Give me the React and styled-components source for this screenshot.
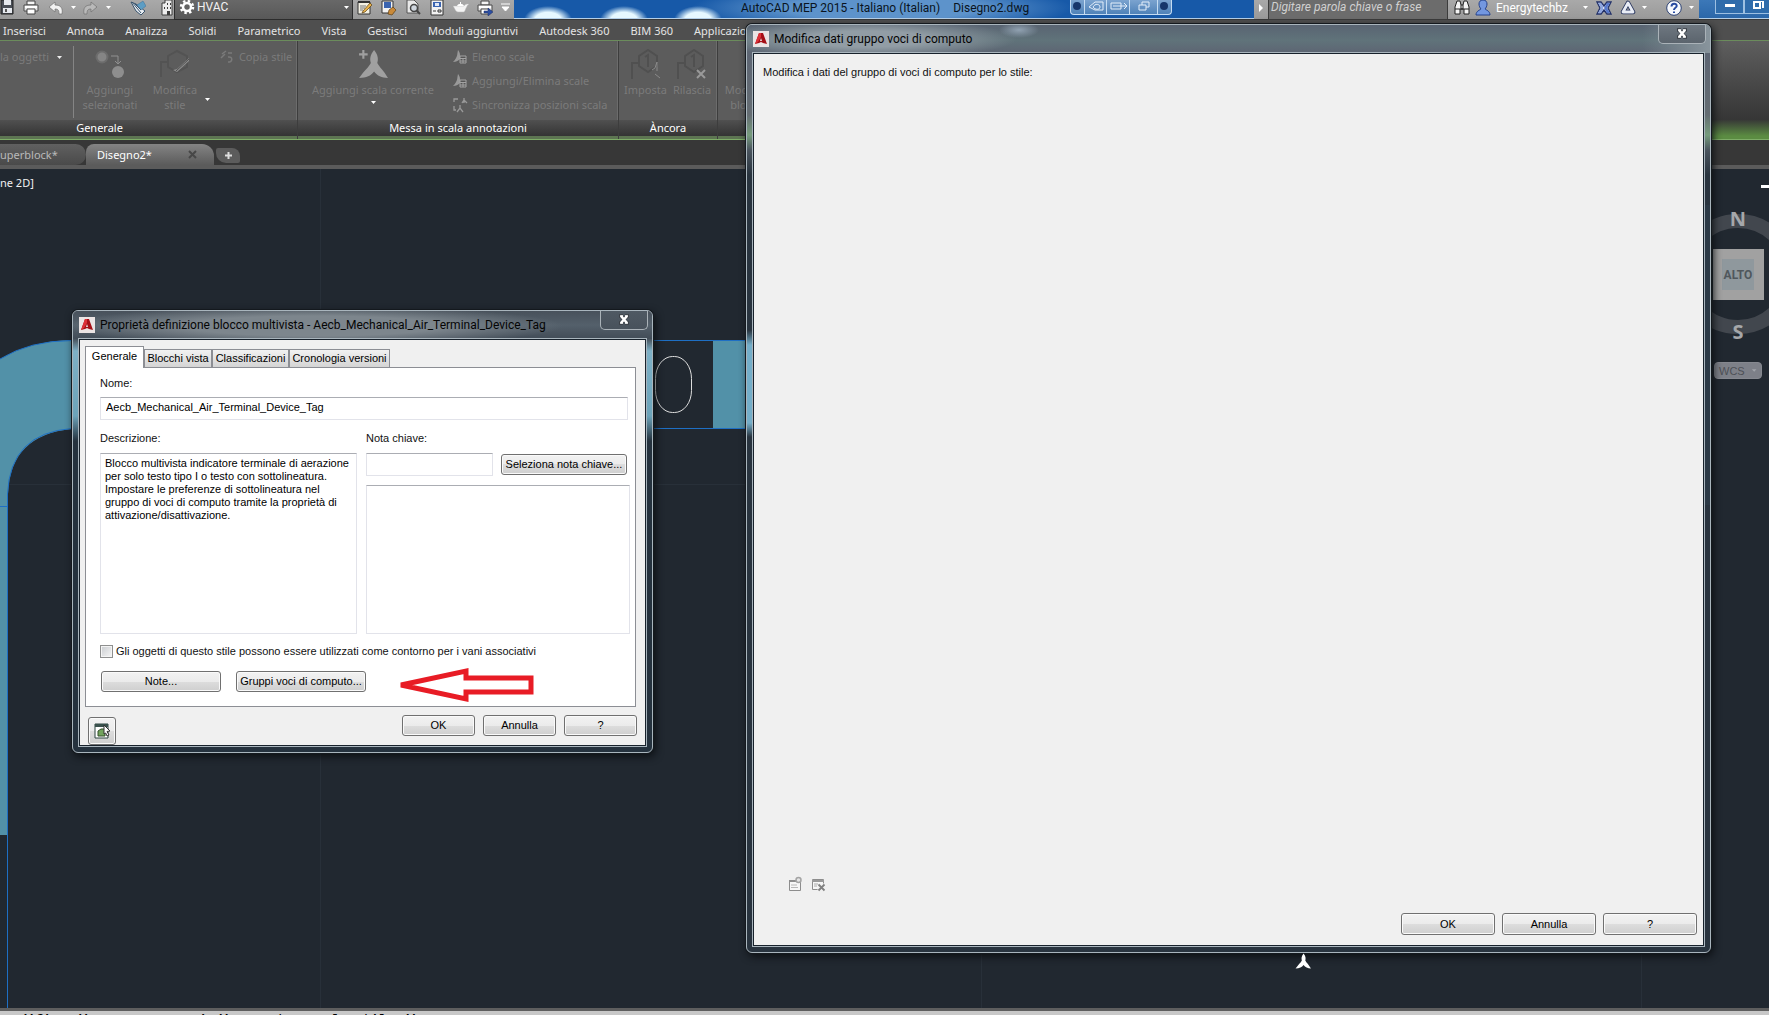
import React from 'react';
import styled, { createGlobalStyle } from 'styled-components';

const ui = '"Noto Sans", "Open Sans", sans-serif';
const titleFont = 'Roboto, "Noto Sans", sans-serif';
const dialogFont = '"Liberation Sans", Arial, sans-serif';

const GlobalStyle = createGlobalStyle`
  * {
    box-sizing: border-box;
  }
  body {
    margin: 0;
    background: #212830;
    overflow: hidden;
  }
  button, input, select, textarea {
    font: inherit;
    margin: 0;
  }
`;

const StyledApp = styled.div`
  position: relative;
  display: flex;
  flex-direction: column;
  height: 100vh;
  overflow: hidden;
  font: 11px/16px ${ui};
  color: #fff;
`;

/* ---------- title bar ---------- */

const TitleBar = styled.header`
  display: flex;
  height: 20px;
  flex-shrink: 0;
  background: #1759a8;
  border-bottom: 1px solid #3a3a3a;
  font: 12px/16px ${titleFont};
`;

const QuickBar = styled.div`
  display: flex;
  align-items: center;
  padding: 0 ${p => p.$right || 0}px 4px 0;
  background: linear-gradient(#a9a9a9, #999);
`;

const IconButton = styled.button`
  display: flex;
  align-items: center;
  justify-content: center;
  width: ${p => p.$w || 24}px;
  height: 16px;
  padding: 0;
  border: 0;
  background: none;
`;

const HelpButton = styled(IconButton)`
  justify-content: flex-end;
  gap: 6px;
`;

const Workspace = styled.label`
  display: flex;
  align-items: center;
  gap: 2px;
  width: 179px;
  height: 20px;
  margin: 0 0 -4px 1px;
  padding: 0 2px 4px 4px;
  border: 1px solid #2c2c2c;
  border-top: 0;
  background: linear-gradient(#686868, #585858);

  select {
    flex: 1;
    height: 16px;
    padding: 0;
    border: 0;
    appearance: none;
    background: none;
    color: #f2f2f2;
    line-height: 16px;
  }
`;

const TitleArea = styled.div`
  flex: 1;
  display: flex;
  align-items: flex-start;
  gap: 13px;
  padding-left: 227px;
  border-bottom: 1px solid #b4cfe8;
  color: #0a1420;
  white-space: nowrap;
  background:
    radial-gradient(ellipse 24px 14px at 34px 20px, #e6f8ff 55%, transparent),
    radial-gradient(ellipse 24px 14px at 110px 20px, #e6f8ff 55%, transparent),
    radial-gradient(ellipse 24px 14px at 184px 20px, #e6f8ff 55%, transparent),
    radial-gradient(ellipse 190px 24px at 368px 8px, #5d93cb 50%, transparent),
    #1759a8;
`;

const MiniBar = styled.div`
  display: flex;
  width: 102px;
  height: 15px;
  margin-left: 28px;
  border: 1px solid #c5dcf2;
  border-top: 0;
  border-radius: 0 0 4px 4px;
  background: linear-gradient(#7ba3cf, #4f82b8);
`;

const Search = styled.input`
  width: 180px;
  height: 20px;
  margin-bottom: -4px;
  padding: 0 2px 4px;
  border: 1px solid #3c3c3c;
  border-top: 0;
  background: #6c6c6c;
  color: #d8d8d8;
  font: italic 12px/16px ${titleFont};

  &::placeholder {
    color: #d0d0d0;
  }
`;

const User = styled.button`
  display: flex;
  align-items: center;
  gap: 5px;
  width: 114px;
  padding: 0;
  border: 0;
  background: none;
  color: #fff;

  span {
    flex: 1;
    text-align: left;
  }
`;

const WindowControls = styled.div`
  display: flex;
  width: 70px;
  padding-left: 16px;
  border-bottom: 1px solid #b4cfe8;
  background: linear-gradient(#3c78b8, #2b67a9);

  button {
    display: flex;
    align-items: center;
    justify-content: center;
    flex: 0 0 29px;
    height: 14px;
    padding: 0 0 3px;
    border: 1px solid #9dc0e2;
    border-top: 0;
    background: #2f6cab;
  }
`;

/* ---------- ribbon ---------- */

const MenuTabs = styled.nav`
  display: flex;
  gap: 21px;
  height: 21px;
  flex-shrink: 0;
  padding: 3px 4px 0 3px;
  background: #4f4f4f;
  border-bottom: 1px solid #6b8c5c;

  a {
    color: #e4e4e4;
    text-decoration: none;
    white-space: nowrap;
  }
`;

const Ribbon = styled.section`
  display: flex;
  height: 99px;
  flex-shrink: 0;
  border-bottom: 1px solid #7fae68;
  background: linear-gradient(#5e5e5e, #363636 80%, #5b8c42 97%);
`;

const Panel = styled.div`
  display: flex;
  flex-direction: column;
  width: ${p => p.$w}px;
  border-right: 1px solid #3d3d3d;
  box-shadow: inset -1px 0 #6c6c6c;
  background: #5c5c5c;
  color: #7b7b7b;
  overflow: hidden;

  footer {
    height: 19px;
    padding-right: ${p => p.$cut || 0}px;
    border-bottom: 3px solid #5d7552;
    background: linear-gradient(#505050, #343434);
    color: #fff;
    line-height: 16px;
    text-align: center;
  }
`;

const PanelBody = styled.div`
  flex: 1;
  display: flex;
  padding: 5px 0 0 ${p => p.$left || 0}px;
`;

const BigTool = styled.button`
  display: flex;
  flex-direction: column;
  align-items: center;
  width: ${p => p.$w}px;
  padding: 3px 0 0;
  border: 0;
  background: none;
  color: inherit;
  line-height: 15px;
  white-space: nowrap;

  svg {
    margin-bottom: 3px;
    flex-shrink: 0;
  }
  svg + span + svg {
    margin: 3px 0 0;
  }
`;

const SmallTools = styled.div`
  display: flex;
  flex-direction: column;
  gap: 8px;
  padding: 3px 0 0 ${p => p.$left || 0}px;
`;

const SmallTool = styled.button`
  display: flex;
  align-items: center;
  gap: 4px;
  height: 16px;
  padding: 0;
  border: 0;
  background: none;
  color: inherit;
  white-space: nowrap;
`;

const Rule = styled.div`
  width: 1px;
  height: 72px;
  margin-left: 10px;
  background: #858585;
`;

const MenuCaret = styled.div`
  padding-top: 44px;
`;

/* ---------- drawing tabs ---------- */

const FileTabs = styled.div`
  display: flex;
  align-items: flex-end;
  height: 29px;
  flex-shrink: 0;
  border-bottom: 4px solid #5b5b5b;
  background: #373737;
`;

const FileTab = styled.button`
  display: flex;
  align-items: center;
  justify-content: space-between;
  width: ${p => p.$w}px;
  height: 21px;
  padding: 0 ${p => (p.$active ? '17px 0 11px' : '0')};
  border: 0;
  border-radius: ${p => (p.$active ? '8px 12px 0 0' : '0 14px 14px 0')};
  background: ${p => (p.$active ? 'linear-gradient(#848484, #5b5b5b)' : 'linear-gradient(#606060, #4a4a4a)')};
  color: ${p => (p.$active ? '#fff' : '#b9b9b9')};
`;

const NewTab = styled.button`
  display: flex;
  align-items: center;
  justify-content: center;
  width: 24px;
  height: 15px;
  margin: 0 0 2px 2px;
  padding: 0;
  border: 0;
  border-radius: 2px 8px 2px 10px;
  background: #5c5c5c;
`;

/* ---------- canvas ---------- */

const Canvas = styled.main`
  position: relative;
  flex: 1;
  overflow: hidden;
  background: #212830;
`;

const Drawing = styled.svg`
  position: absolute;
  inset: 0;
  width: 100%;
  height: 100%;
`;

const ViewLabel = styled.div`
  padding-top: 6px;
  color: #f0f0f0;
`;

const Compass = styled.div`
  position: absolute;
  top: 15px;
  right: -29px;
  width: 120px;
`;

const Wcs = styled.button`
  position: absolute;
  top: 193px;
  right: 7px;
  display: flex;
  align-items: center;
  gap: 6px;
  width: 48px;
  height: 17px;
  padding: 0 4px;
  border: 1px solid #85888f;
  border-radius: 4px;
  background: #7d8088;
  color: #4d5056;
  font: 11px/14px "Liberation Sans", sans-serif;
`;

const CommandLine = styled.footer`
  height: 7px;
  flex-shrink: 0;
  padding-left: 4px;
  overflow: hidden;
  border-top: 3px solid #5e5e5e;
  background: #c8c8c8;
  color: #000;
  font: bold 13px/18px "Liberation Mono", monospace;
  white-space: pre;
`;

/* ---------- dialogs ---------- */

const Dialog = styled.section`
  position: absolute;
  display: flex;
  flex-direction: column;
  padding: 0 6px 6px;
  border: 1px solid #a9b5bd;
  border-radius: 6px;
  box-shadow: 0 0 0 1px #14191e, 2px 3px 8px #0a0d10;
  color: #111;
  font: 11px/13px ${dialogFont};
`;

const StyleDialog = styled(Dialog)`
  top: 310px;
  left: 72px;
  width: 581px;
  background: linear-gradient(
    #4c5660 0,
    #48525c 28px,
    #7eb0c6 40px,
    #6ca3b9 105px,
    #25323e 130px,
    #25323e 100%
  );
`;

const GroupDialog = styled(Dialog)`
  top: 24px;
  right: 58px;
  bottom: 62px;
  left: 746px;
  background:
    linear-gradient(90deg, transparent 50%, #2b3946 50%) 0 180px / 100% 300px no-repeat,
    linear-gradient(
      #596472 0,
      #60737a 16px,
      #5d6573 30px,
      #656d73 90px,
      #769c7d 110px,
      #4b555f 125px,
      #29343f 150px,
      #29343f 305px,
      #74aec9 320px,
      #74aec9 398px,
      #29343f 412px
    );
`;

const DialogTitle = styled.header`
  display: flex;
  align-items: flex-start;
  justify-content: space-between;
  height: 28px;
  margin: 0 -6px;
  padding: 0 4px 0 6px;
  border-radius: 5px 5px 0 0;
  background: ${p => p.$dark
    ? 'radial-gradient(ellipse 250px 20px at 240px 15px, #7d868d 50%, transparent), linear-gradient(#48515b, #54606b 50%, #424c57)'
    : 'radial-gradient(ellipse 150px 20px at 120px 14px, #929da5 40%, transparent), radial-gradient(ellipse 20px 8px at 272px 5px, #90a1b1, transparent), linear-gradient(90deg, transparent 93%, #88949c), linear-gradient(#596472, #60737a 55%, #5d6573)'};
  color: #050505;
  font: 12px/16px ${titleFont};

  h1 {
    display: flex;
    align-items: center;
    gap: 5px;
    margin: 6px 0 0;
    font: inherit;
  }
`;

const Close = styled.button`
  display: flex;
  align-items: center;
  justify-content: center;
  width: 48px;
  height: 19px;
  padding: 0 0 2px;
  border: 1px solid #aab2b8;
  border-top: 0;
  border-radius: 0 0 5px 5px;
  background: linear-gradient(#6e7780, #5b646d);
`;

const DarkClose = styled(Close)`
  background: linear-gradient(#4f5963, #48525c);
`;

const DialogContent = styled.div`
  flex: 1;
  display: flex;
  flex-direction: column;
  padding: ${p => p.$pad};
  border: 1px solid #18222c;
  outline: 1px solid #a9b5bd;
  background: #f0f0f0;
`;

const Tabs = styled.div`
  display: flex;
  align-items: flex-end;
  height: 21px;
`;

const Tab = styled.button`
  position: relative;
  width: ${p => p.$w}px;
  height: ${p => (p.$active ? 22 : 18)}px;
  margin-bottom: ${p => (p.$active ? -1 : 0)}px;
  padding: 0 0 ${p => (p.$active ? 2 : 0)}px;
  border: 1px solid #8c8e94;
  border-bottom: 0;
  background: ${p => (p.$active ? '#fff' : 'linear-gradient(#f2f2f2, #d4d4d4)')};
  color: #000;
  white-space: nowrap;
`;

const TabPanel = styled.div`
  display: flex;
  flex-direction: column;
  height: 340px;
  padding: 9px 5px 0 14px;
  border: 1px solid #8c8e94;
  background: #fff;
`;

const FieldLabel = styled.label`
  height: 14px;
`;

const TextInput = styled.input`
  width: ${p => p.$w || '100%'};
  height: 23px;
  padding: 0 5px 3px;
  border: 1px solid #e2e3ea;
  border-top-color: #abadb3;
  background: #fff;
  color: #000;
`;

const TextBox = styled.textarea`
  width: 100%;
  height: ${p => p.$h}px;
  padding: 3px 4px;
  border: 1px solid #e2e3ea;
  border-top-color: #abadb3;
  background: #fff;
  color: #000;
  resize: none;
  overflow: hidden;
`;

const NameField = styled.div`
  display: flex;
  flex-direction: column;
  gap: 6px;
  padding-right: 2px;
`;

const Columns = styled.div`
  display: grid;
  grid-template-columns: 257px 1fr;
  gap: 9px;
  margin-top: 12px;
`;

const Column = styled.div`
  display: flex;
  flex-direction: column;
  gap: 9px;

  label + * {
    margin-top: -2px;
  }
`;

const KeynoteRow = styled.div`
  display: flex;
  align-items: center;
  justify-content: space-between;
  padding-right: 3px;
`;

const CheckLabel = styled.label`
  display: flex;
  align-items: center;
  gap: 3px;
  margin-top: 11px;

  input {
    appearance: none;
    width: 13px;
    height: 13px;
    border: 1px solid #8e8f8f;
    background: linear-gradient(135deg, #c9ccd0, #f6f6f6);
    box-shadow: inset 0 0 0 1px #f4f4f4;
  }
`;

const ActionRow = styled.div`
  display: flex;
  align-items: flex-start;
  gap: 15px;
  margin-top: 13px;
  padding-left: 1px;
`;

const ArrowRoom = styled.div`
  height: 36px;
  margin: -4px 0 0 16px;
`;

const PushButton = styled.button`
  width: ${p => p.$w}px;
  height: ${p => p.$h || 21}px;
  padding: 0;
  border: 1px solid #707070;
  border-radius: 3px;
  background: linear-gradient(#f2f2f2, #ebebeb 50%, #dddddd 50%, #cfcfcf);
  box-shadow: inset 0 0 0 1px #fafafa;
  color: #000;
  white-space: nowrap;
`;

const IconPush = styled(PushButton)`
  display: flex;
  align-items: center;
  justify-content: center;
  margin: 2px auto 0 3px;
`;

const DialogFooter = styled.div`
  display: flex;
  gap: ${p => p.$gap}px;
  justify-content: flex-end;
  margin: 8px -1px 0 0;
`;

const ListTools = styled.div`
  display: flex;
  gap: 7px;
  margin: auto 0 13px 24px;

  button {
    width: 16px;
  }
`;

/* ---------- icons ---------- */

const Svg = ({ w = 16, h = 16, children }) => (
  <svg width={w} height={h} viewBox={`0 0 ${w} ${h}`} aria-hidden="true">{children}</svg>
);

const Caret = ({ color = '#fff' }) => (
  <Svg w={7} h={5}><path d="M1 1h5L3.500 4z" fill={color} /></Svg>
);

const Save = () => (
  <Svg>
    <path d="M1 0h12v14H1z" fill="#4a4f57" stroke="#222" />
    <path d="M4 0h7v5H4zM3 8h9v5H3z" fill="#e6e9ee" />
    <path d="M5 9h2v3H5z" fill="#555" />
  </Svg>
);

const Printer = ({ arrow }) => (
  <Svg>
    <path d="M4 1h8v4H4z" fill="#f4f4f4" stroke="#444" />
    <path d="M1 5h14v6H1z" fill="#e4e4e4" stroke="#4d4d4d" />
    <path d="M2 6h12v2H2z" fill="#fff" />
    <path d="M4 9h8v5H4z" fill="#fff" stroke="#444" />
    {arrow && <path d="M7 11h4V8l5 4-5 4v-3H7z" fill="#2c4fa3" stroke="#1c2c60" strokeWidth="0.500" />}
  </Svg>
);

const Undo = ({ flip, color = '#f2f2f2' }) => (
  <Svg>
    <g transform={flip ? 'translate(16 0) scale(-1 1)' : undefined}>
      <path d="M7 2v3c6 0 8 3 7 9h-3c0-4-1-5-4-5v3L1 7z" fill={color} stroke="#707070" strokeWidth="0.700" />
    </g>
  </Svg>
);

const Brush = () => (
  <Svg>
    <path d="M1 2l5 2 9 7-4 4-5-4z" fill="#e8edf2" stroke="#39536c" />
    <path d="M7 5l6-4 3 5-5 4z" fill="#5c9dc4" stroke="#3c6f94" strokeWidth="0.500" />
    <path d="M2 2l9 11M5 4l6 6" stroke="#39536c" />
  </Svg>
);

const Building = () => (
  <Svg w={13}>
    <path d="M5 0h7v15H2V3h3z" fill="#ededed" stroke="#3c3c3c" />
    <path d="M7 3h1v2H7zM10 3h1v2h-1zM7 7h1v2H7zM10 7h1v2h-1zM4 7h1v2H4zM7 11h3v4H7z" fill="#3c3c3c" />
  </Svg>
);

const Gear = () => (
  <Svg>
    <circle cx="8" cy="8" r="4" fill="none" stroke="#fff" strokeWidth="2.500" />
    <circle cx="8" cy="8" r="6" fill="none" stroke="#fff" strokeWidth="2.500" strokeDasharray="2.400 2.312" />
  </Svg>
);

const Notepad = () => (
  <Svg>
    <path d="M1 2h12v12H1z" fill="#f4f1e4" stroke="#333" />
    <path d="M1 1h12v2H1z" fill="#333" />
    <path d="M3 6h6M3 8h5M3 10h3" stroke="#777" />
    <path d="M6 11l7-8 2 2-7 7-3 1z" fill="#e9b44c" stroke="#5a3d13" strokeWidth="0.700" />
  </Svg>
);

const PagePaint = () => (
  <Svg>
    <path d="M1 1h11v12H1z" fill="#f2f2f2" stroke="#333" />
    <path d="M3 2h7v6H3z" fill="#3a64b0" />
    <path d="M8 10l4-3 3 3-4 5-4-1z" fill="#c98a3a" stroke="#5a3d13" strokeWidth="0.700" />
  </Svg>
);

const Preview = () => (
  <Svg>
    <path d="M2 0h7l4 4v9H2z" fill="#e9e9e9" stroke="#555" />
    <circle cx="9" cy="8" r="3.500" fill="#cfd6de" stroke="#444" strokeWidth="1.500" />
    <path d="M11.500 10.500L15 14" stroke="#444" strokeWidth="2" />
  </Svg>
);

const Sheet = () => (
  <Svg>
    <path d="M2 0h12v15H2z" fill="#f2f2f2" stroke="#333" />
    <path d="M4 2h8v5H4z" fill="#3a64b0" />
    <path d="M6 3h4v3H6z" fill="#dfe7f5" />
    <path d="M4 11h3M9 10h3v2H9z" stroke="#333" fill="none" />
  </Svg>
);

const Teapot = () => (
  <Svg>
    <path d="M3 6h8c1-2 3-2 5-2-3 2-3 6-5 8H5C3 12 2 9 0 6h3z" fill="#f4f4f4" stroke="#bbb" strokeWidth="0.500" />
    <path d="M4 6c1-3 6-3 7 0z" fill="#fff" />
    <path d="M7 2h1v2H7z" fill="#fff" />
  </Svg>
);

const MoreTools = () => (
  <Svg w={9} h={9}><path d="M0 1h9M1 4h7L4.500 8z" stroke="#fff" fill="#fff" /></Svg>
);

const Binoculars = () => (
  <Svg>
    <path d="M3 1h3l1 4h2l1-4h3l2 6v7h-5V9H6v5H1V7z" fill="#f4f4f4" stroke="#222" />
    <path d="M1 9h5M10 9h5M7 5v4h2V5" stroke="#222" fill="none" />
  </Svg>
);

const Person = () => (
  <Svg>
    <path d="M8 0c3 0 4 2 4 4s-1 4-2 5c1 1 5 2 5 6H1c0-4 4-5 5-6-1-1-2-3-2-5s1-4 4-4z" fill="#7397e0" stroke="#24418c" />
  </Svg>
);

const Exchange = () => (
  <Svg>
    <path d="M1 2h4l3 4 3-4h4l-3 6 3 6h-4l-3-4-3 4H1l3-6z" fill="#e4eaf8" stroke="#24336b" strokeWidth="1.400" />
    <path d="M11 3h3l-3 5 3 5h-3L8 8z" fill="#5577cc" />
    <path d="M2 3h3l2 3v4l-2 3H2l3-5z" fill="#8ea6e0" />
  </Svg>
);

const Triangle = () => (
  <Svg>
    <path d="M8 3l5 9H3z" fill="none" stroke="#26335c" strokeWidth="4.600" strokeLinejoin="round" />
    <path d="M8 3l5 9H3z" fill="none" stroke="#e8ecf5" strokeWidth="2.800" strokeLinejoin="round" />
  </Svg>
);

const HelpIcon = () => (
  <Svg>
    <circle cx="8" cy="8" r="7.300" fill="#f7f9fd" stroke="#2c4173" />
    <path d="M5.500 6.500c0-4 5.500-3.500 5.200-.5C10.500 8 8 7.500 8 10M8 11.500v1.500" stroke="#274aa0" strokeWidth="2" fill="none" />
  </Svg>
);

const CrossIcon = () => (
  <Svg w={12} h={11}>
    <path d="M3 2l6 7M9 2L3 9M1 2h4M7 2h4M1 9h4M7 9h4" stroke="#3b4047" strokeWidth="3.600" />
    <path d="M3 2l6 7M9 2L3 9" stroke="#fff" strokeWidth="2.600" />
    <path d="M2 2h3M7 2h3M2 9h3M7 9h3" stroke="#fff" strokeWidth="1.500" />
  </Svg>
);

const Logo = () => (
  <Svg>
    <path d="M0 0h16v16H0z" fill="#ebe4e4" />
    <path d="M6 2h4l4 11-4-1-2-1-2 1-4 1z" fill="#a50f16" />
    <path d="M6 2h2v4l-3 5-3 2z" fill="#dd3038" />
    <path d="M8 7l1 3H7z" fill="#ebe4e4" />
  </Svg>
);

const AddSelected = () => (
  <Svg w={30} h={30}>
    <circle cx="7" cy="8" r="5.500" fill="#858585" stroke="#6c6c6c" strokeWidth="2" />
    <circle cx="23" cy="23" r="6" fill="#8e8e8e" />
    <path d="M16 7h7v8M20 12l3 3 3-3" fill="none" stroke="#909090" />
  </Svg>
);

const EditStyle = () => (
  <Svg w={30} h={30}>
    <path d="M1 28V13h8M8 7l9-5 10 5v11l-10 5-9-5z" fill="none" stroke="#535353" strokeWidth="2" />
    <path d="M13 21l4-1L29 9v3L17 23z" fill="#8e8e8e" />
    <path d="M16 22L29 10" stroke="#505050" />
  </Svg>
);

const AnnoScale = ({ w = 30, color = '#a0a0a0' }) => (
  <svg width={w} height={w} viewBox="0 0 28 28" aria-hidden="true">
    <path d="M15 1c-4 5-4 9-3 12-2 4-6 7-11 14 7 0 11-2 14-6 3 4 7 6 13 6-4-7-8-10-10-14 1-3 1-7-3-12z" fill={color} />
    {w > 20 && <path d="M5 1v8M1 5h8" stroke={color} strokeWidth="2" />}
  </svg>
);

const CopyStyle = () => (
  <Svg>
    <path d="M3 5l4-3M6 5L2 9M9 4h4M9 8c5-1 5 5 0 5" fill="none" stroke="#7a7a7a" strokeWidth="1.500" />
  </Svg>
);

const ScaleList = () => (
  <Svg>
    <path d="M6 1c-1 4 0 7-5 12 3 0 5-1 7-3V6c0-2-1-4-2-5z" fill="#999" />
    <path d="M8 7h6v7H8zM8 9.500h6M8 12h6M11 9v5" fill="#555" stroke="#a3a3a3" />
  </Svg>
);

const ScaleSync = () => (
  <Svg>
    <path d="M2 5V2h4M12 6V1M10 6l2-3 3 3M5 15l3-4 3 4M8 8v4M2 9v4h2" fill="none" stroke="#999" strokeWidth="1.300" />
  </Svg>
);

const Anchor = ({ release }) => (
  <Svg w={32} h={30}>
    <path d="M2 30V14h8M9 7l9-6 9 6v10l-9 6-9-6z" fill="none" stroke="#505050" strokeWidth="2" />
    <path d="M15 8l3-2v12" stroke="#505050" strokeWidth="2" fill="none" />
    {release
      ? <path d="M21 21l8 8M29 21l-8 8" stroke="#999" strokeWidth="2" />
      : <path d="M22 21l3-2 2-6v9M25 25l5 4" stroke="#8a8a8a" fill="none" />}
  </Svg>
);

const SheetNew = () => (
  <Svg>
    <path d="M2.500 4.500h11v10h-11z" fill="#f7f7f7" stroke="#8d8d8d" />
    <path d="M2 5h8" stroke="#8d8d8d" strokeWidth="2" />
    <path d="M4 9h6M4 11.500h7" stroke="#b8b8b8" />
    <circle cx="11.500" cy="4" r="2.500" fill="#e6e6e6" stroke="#a4a4a4" strokeWidth="1.500" />
  </Svg>
);

const SheetDelete = () => (
  <Svg>
    <path d="M2.500 3.500h11v10h-11z" fill="#f7f7f7" stroke="#8d8d8d" />
    <path d="M2 5h12" stroke="#9a9a9a" strokeWidth="2" />
    <path d="M4 8h4M4 10h3" stroke="#aaa" />
    <path d="M8.500 8.500l6 6M14.500 8.500l-6 6" stroke="#f0f0f0" strokeWidth="4" />
    <path d="M8.500 8.500l6 6M14.500 8.500l-6 6" stroke="#808080" strokeWidth="1.800" />
  </Svg>
);

const StyleBrowser = () => (
  <Svg>
    <path d="M1 1h13v14H1z" fill="#fff" stroke="#2c4540" />
    <path d="M1 1h13v3H1z" fill="#39514c" />
    <path d="M4 8l3-2h4v7H4z" fill="#72a35d" stroke="#33502b" />
    <path d="M10 2l6 6-3 .5 2 3.500-2 1-1.300-3L10 11z" fill="#fff" stroke="#333" />
  </Svg>
);

const ArrowMark = () => (
  <Svg w={138} h={36}>
    <path d="M4 18l65-14v7h65v14H69v7z" fill="none" stroke="#e81c25" strokeWidth="5" />
  </Svg>
);

/* ---------- data ---------- */

const menuItems = [
  'Inserisci', 'Annota', 'Analizza', 'Solidi', 'Parametrico', 'Vista',
  'Gestisci', 'Moduli aggiuntivi', 'Autodesk 360', 'BIM 360', 'Applicazio'
];

const description = 'Blocco multivista indicatore terminale di aerazione\nper solo testo tipo I o testo con sottolineatura.\nImpostare le preferenze di sottolineatura nel\ngruppo di voci di computo tramite la proprietà di\nattivazione/disattivazione.';

function AppTitle() {
  return (
    <TitleBar>
      <QuickBar>
        <IconButton $w={16} aria-label="Salva"><Save /></IconButton>
        <IconButton $w={30} aria-label="Stampa"><Printer /></IconButton>
        <IconButton $w={20} aria-label="Annulla"><Undo /></IconButton>
        <IconButton $w={14} aria-label="Elenco annulla"><Caret /></IconButton>
        <IconButton $w={20} aria-label="Ripeti"><Undo flip color="#b9b9b9" /></IconButton>
        <IconButton $w={16} aria-label="Elenco ripeti"><Caret /></IconButton>
        <IconButton $w={44} aria-label="Pennello"><Brush /></IconButton>
        <IconButton $w={13} aria-label="Progetto"><Building /></IconButton>
        <Workspace>
          <Gear />
          <select aria-label="Area di lavoro"><option>HVAC</option></select>
          <Caret />
        </Workspace>
        <IconButton aria-label="Note"><Notepad /></IconButton>
        <IconButton aria-label="Stili"><PagePaint /></IconButton>
        <IconButton aria-label="Anteprima"><Preview /></IconButton>
        <IconButton aria-label="Foglio"><Sheet /></IconButton>
        <IconButton aria-label="Rendering"><Teapot /></IconButton>
        <IconButton aria-label="Pubblica"><Printer arrow /></IconButton>
        <IconButton $w={17} aria-label="Altro"><MoreTools /></IconButton>
      </QuickBar>
      <TitleArea>
        <span>AutoCAD MEP 2015 - Italiano (Italian)</span>
        <span>Disegno2.dwg</span>
        <MiniBar>
          <Svg w={100} h={14}>
            <path d="M13.500 0v14M35.500 0v14M58.500 0v14M86.500 0v14" stroke="#c5dcf2" />
            <circle cx="6" cy="6" r="4" fill="#17366b" />
            <circle cx="93" cy="6" r="4" fill="#17366b" />
            <path d="M18 7l6-5h8v8h-8zM22 7c2-4 7-3 7 0s-5 3-7 0zM40 3h10v6H40zM42 6h13M53 3l3 3-3 3M68 5h7v5h-7zM71 5V2h7v5h-3" fill="none" stroke="#e3eefa" />
          </Svg>
        </MiniBar>
      </TitleArea>
      <QuickBar $right={4}>
        <IconButton $w={14} aria-label="Comprimi"><Svg w={6} h={8}><path d="M1 0l4 4-4 4z" fill="#fff" /></Svg></IconButton>
        <Search aria-label="Cerca" placeholder="Digitare parola chiave o frase" />
        <IconButton $w={27} aria-label="Trova"><Binoculars /></IconButton>
        <User><Person /><span>Energytechbz</span><Caret /></User>
        <IconButton $w={30} aria-label="Exchange"><Exchange /></IconButton>
        <IconButton $w={18} aria-label="Autodesk 360"><Triangle /></IconButton>
        <IconButton $w={14} aria-label="Elenco 360"><Caret /></IconButton>
        <HelpButton $w={44} aria-label="Guida"><HelpIcon /><Caret /></HelpButton>
      </QuickBar>
      <WindowControls>
        <button aria-label="Riduci"><Svg w={12} h={5}><path d="M1 1h10v3H1z" fill="#fff" /></Svg></button>
        <button aria-label="Ripristina"><Svg w={11} h={9}><path d="M1 1h6v6H1zM4 0h6v7" fill="none" stroke="#fff" strokeWidth="2" /></Svg></button>
      </WindowControls>
    </TitleBar>
  );
}

function AppRibbon() {
  return (
    <Ribbon id="ribbon">
      <Panel $w={298} $cut={98}>
        <PanelBody>
          <SmallTools>
            <SmallTool>la oggetti&nbsp; <Caret color="#eee" /></SmallTool>
          </SmallTools>
          <Rule />
          <BigTool $w={72}><AddSelected /><span>Aggiungi<br />selezionati</span></BigTool>
          <BigTool $w={58}><EditStyle /><span>Modifica<br />stile</span></BigTool>
          <MenuCaret><Caret /></MenuCaret>
          <SmallTools $left={8}>
            <SmallTool><CopyStyle />Copia stile</SmallTool>
          </SmallTools>
        </PanelBody>
        <footer>Generale</footer>
      </Panel>
      <Panel $w={321}>
        <PanelBody $left={12}>
          <BigTool $w={126}><AnnoScale /><span>Aggiungi scala corrente</span><Caret /></BigTool>
          <SmallTools $left={16}>
            <SmallTool><ScaleList />Elenco scale</SmallTool>
            <SmallTool><ScaleList />Aggiungi/Elimina scale</SmallTool>
            <SmallTool><ScaleSync />Sincronizza posizioni scala</SmallTool>
          </SmallTools>
        </PanelBody>
        <footer>Messa in scala annotazioni</footer>
      </Panel>
      <Panel $w={99}>
        <PanelBody $left={4}>
          <BigTool $w={45}><Anchor /><span>Imposta</span></BigTool>
          <BigTool $w={48}><Anchor release /><span>Rilascia</span></BigTool>
        </PanelBody>
        <footer>Àncora</footer>
      </Panel>
      <Panel $w={160}>
        <PanelBody $left={4}>
          <BigTool $w={50}><Svg w={30} h={30} /><span>Modifica<br />blocco</span></BigTool>
        </PanelBody>
        <footer />
      </Panel>
    </Ribbon>
  );
}

function DrawingArea() {
  return (
    <Canvas>
      <Drawing aria-hidden="true">
        <path d="M320.500 0v900M981.500 0v900M1641.500 0v900M0 315.500h746" stroke="#283039" />
        <path d="M0 190Q30 172 72 171v89Q10 266 8 325v12H0z" fill="#5291a8" />
        <path d="M0 337h8v329H0z" fill="#5291a8" />
        <path d="M713 171h40v89h-40z" fill="#5291a8" />
        <path d="M0 190Q30 171.500 72 171.500H750M750 259.500H72Q10 264 7.500 325V900M0 337.500h7" fill="none" stroke="#1e6fc4" />
        <rect x="655.500" y="187.500" width="36" height="56" rx="17" ry="22" fill="none" stroke="#ddd" />
      </Drawing>
      <ViewLabel>ne 2D]</ViewLabel>
      <Compass>
        <svg width="120" height="170" viewBox="0 0 120 170" aria-hidden="true">
          <circle cx="60" cy="90" r="53" fill="none" stroke="#42474e" strokeWidth="14" />
          <path d="M35 65h51v51H35z" fill="#a1a1a1" />
          <path d="M44 75h32v31H44z" fill="#8f989d" />
          <path d="M83 1h12v3H83z" fill="#fff" />
          <g fontFamily="Noto Sans, sans-serif" fontWeight="bold" textAnchor="middle">
            <text x="60" y="42" fontSize="20" fill="#a5a7aa">N</text>
            <text x="60" y="155" fontSize="20" fill="#a5a7aa">S</text>
            <text x="60" y="95" fontSize="12" fill="#50575c" fontFamily="Roboto, sans-serif">ALTO</text>
          </g>
        </svg>
      </Compass>
      <Wcs>WCS <Caret color="#a2a5ab" /></Wcs>
    </Canvas>
  );
}

function StyleProperties() {
  return (
    <StyleDialog role="dialog" aria-labelledby="style-title">
      <DialogTitle $dark>
        <h1 id="style-title"><Logo />Proprietà definizione blocco multivista - Aecb_Mechanical_Air_Terminal_Device_Tag</h1>
        <DarkClose aria-label="Chiudi"><CrossIcon /></DarkClose>
      </DialogTitle>
      <DialogContent $pad="6px 9px 0 5px">
        <Tabs role="tablist">
          <Tab role="tab" aria-selected="true" $active $w={59}>Generale</Tab>
          <Tab role="tab" $w={68}>Blocchi vista</Tab>
          <Tab role="tab" $w={77}>Classificazioni</Tab>
          <Tab role="tab" $w={101}>Cronologia versioni</Tab>
        </Tabs>
        <TabPanel role="tabpanel">
          <NameField>
            <FieldLabel htmlFor="name">Nome:</FieldLabel>
            <TextInput id="name" defaultValue="Aecb_Mechanical_Air_Terminal_Device_Tag" />
          </NameField>
          <Columns>
            <Column>
              <FieldLabel htmlFor="description">Descrizione:</FieldLabel>
              <TextBox id="description" $h={181} defaultValue={description} />
            </Column>
            <Column>
              <FieldLabel htmlFor="keynote">Nota chiave:</FieldLabel>
              <KeynoteRow>
                <TextInput id="keynote" $w="127px" />
                <PushButton $w={126}>Seleziona nota chiave...</PushButton>
              </KeynoteRow>
              <TextBox aria-label="Testo nota chiave" $h={149} />
            </Column>
          </Columns>
          <CheckLabel>
            <input type="checkbox" />
            Gli oggetti di questo stile possono essere utilizzati come contorno per i vani associativi
          </CheckLabel>
          <ActionRow>
            <PushButton $w={120}>Note...</PushButton>
            <PushButton $w={130}>Gruppi voci di computo...</PushButton>
            <ArrowRoom><ArrowMark /></ArrowRoom>
          </ActionRow>
        </TabPanel>
        <DialogFooter $gap={8}>
          <IconPush $w={28} $h={28} aria-label="Sfoglia stili"><StyleBrowser /></IconPush>
          <PushButton $w={73}>OK</PushButton>
          <PushButton $w={73}>Annulla</PushButton>
          <PushButton $w={73}>?</PushButton>
        </DialogFooter>
      </DialogContent>
    </StyleDialog>
  );
}

function GroupData() {
  return (
    <GroupDialog role="dialog" aria-labelledby="group-title">
      <DialogTitle>
        <h1 id="group-title"><Logo />Modifica dati gruppo voci di computo</h1>
        <Close aria-label="Chiudi"><CrossIcon /></Close>
      </DialogTitle>
      <DialogContent $pad="12px 7px 10px 9px">
        <span>Modifica i dati del gruppo di voci di computo per lo stile:</span>
        <ListTools>
          <IconButton aria-label="Aggiungi gruppo"><SheetNew /></IconButton>
          <IconButton aria-label="Rimuovi gruppo"><SheetDelete /></IconButton>
        </ListTools>
        <DialogFooter $gap={7}>
          <PushButton $w={94} $h={22}>OK</PushButton>
          <PushButton $w={94} $h={22}>Annulla</PushButton>
          <PushButton $w={94} $h={22}>?</PushButton>
        </DialogFooter>
      </DialogContent>
    </GroupDialog>
  );
}

const Pointer = styled.div`
  position: absolute;
  bottom: 46px;
  left: 1295px;
  height: 16px;
`;

function App() {
  return (
    <StyledApp>
      <GlobalStyle />
      <AppTitle />
      <MenuTabs>
        {menuItems.map(item => <a key={item} href="#ribbon">{item}</a>)}
      </MenuTabs>
      <AppRibbon />
      <FileTabs>
        <FileTab $w={86}>uperblock*</FileTab>
        <FileTab $w={128} $active>
          Disegno2*
          <Svg w={9} h={9}><path d="M1 1l7 7M8 1L1 8" stroke="#474747" strokeWidth="2" /></Svg>
        </FileTab>
        <NewTab aria-label="Nuovo disegno">
          <Svg w={7} h={7}><path d="M3.500 0v7M0 3.500h7" stroke="#ddd" strokeWidth="2" /></Svg>
        </NewTab>
      </FileTabs>
      <DrawingArea />
      <CommandLine>modifica di un gruppo voci di computo per lo stile di</CommandLine>
      <StyleProperties />
      <GroupData />
      <Pointer><AnnoScale w={16} color="#fff" /></Pointer>
    </StyledApp>
  );
}

export default App;
